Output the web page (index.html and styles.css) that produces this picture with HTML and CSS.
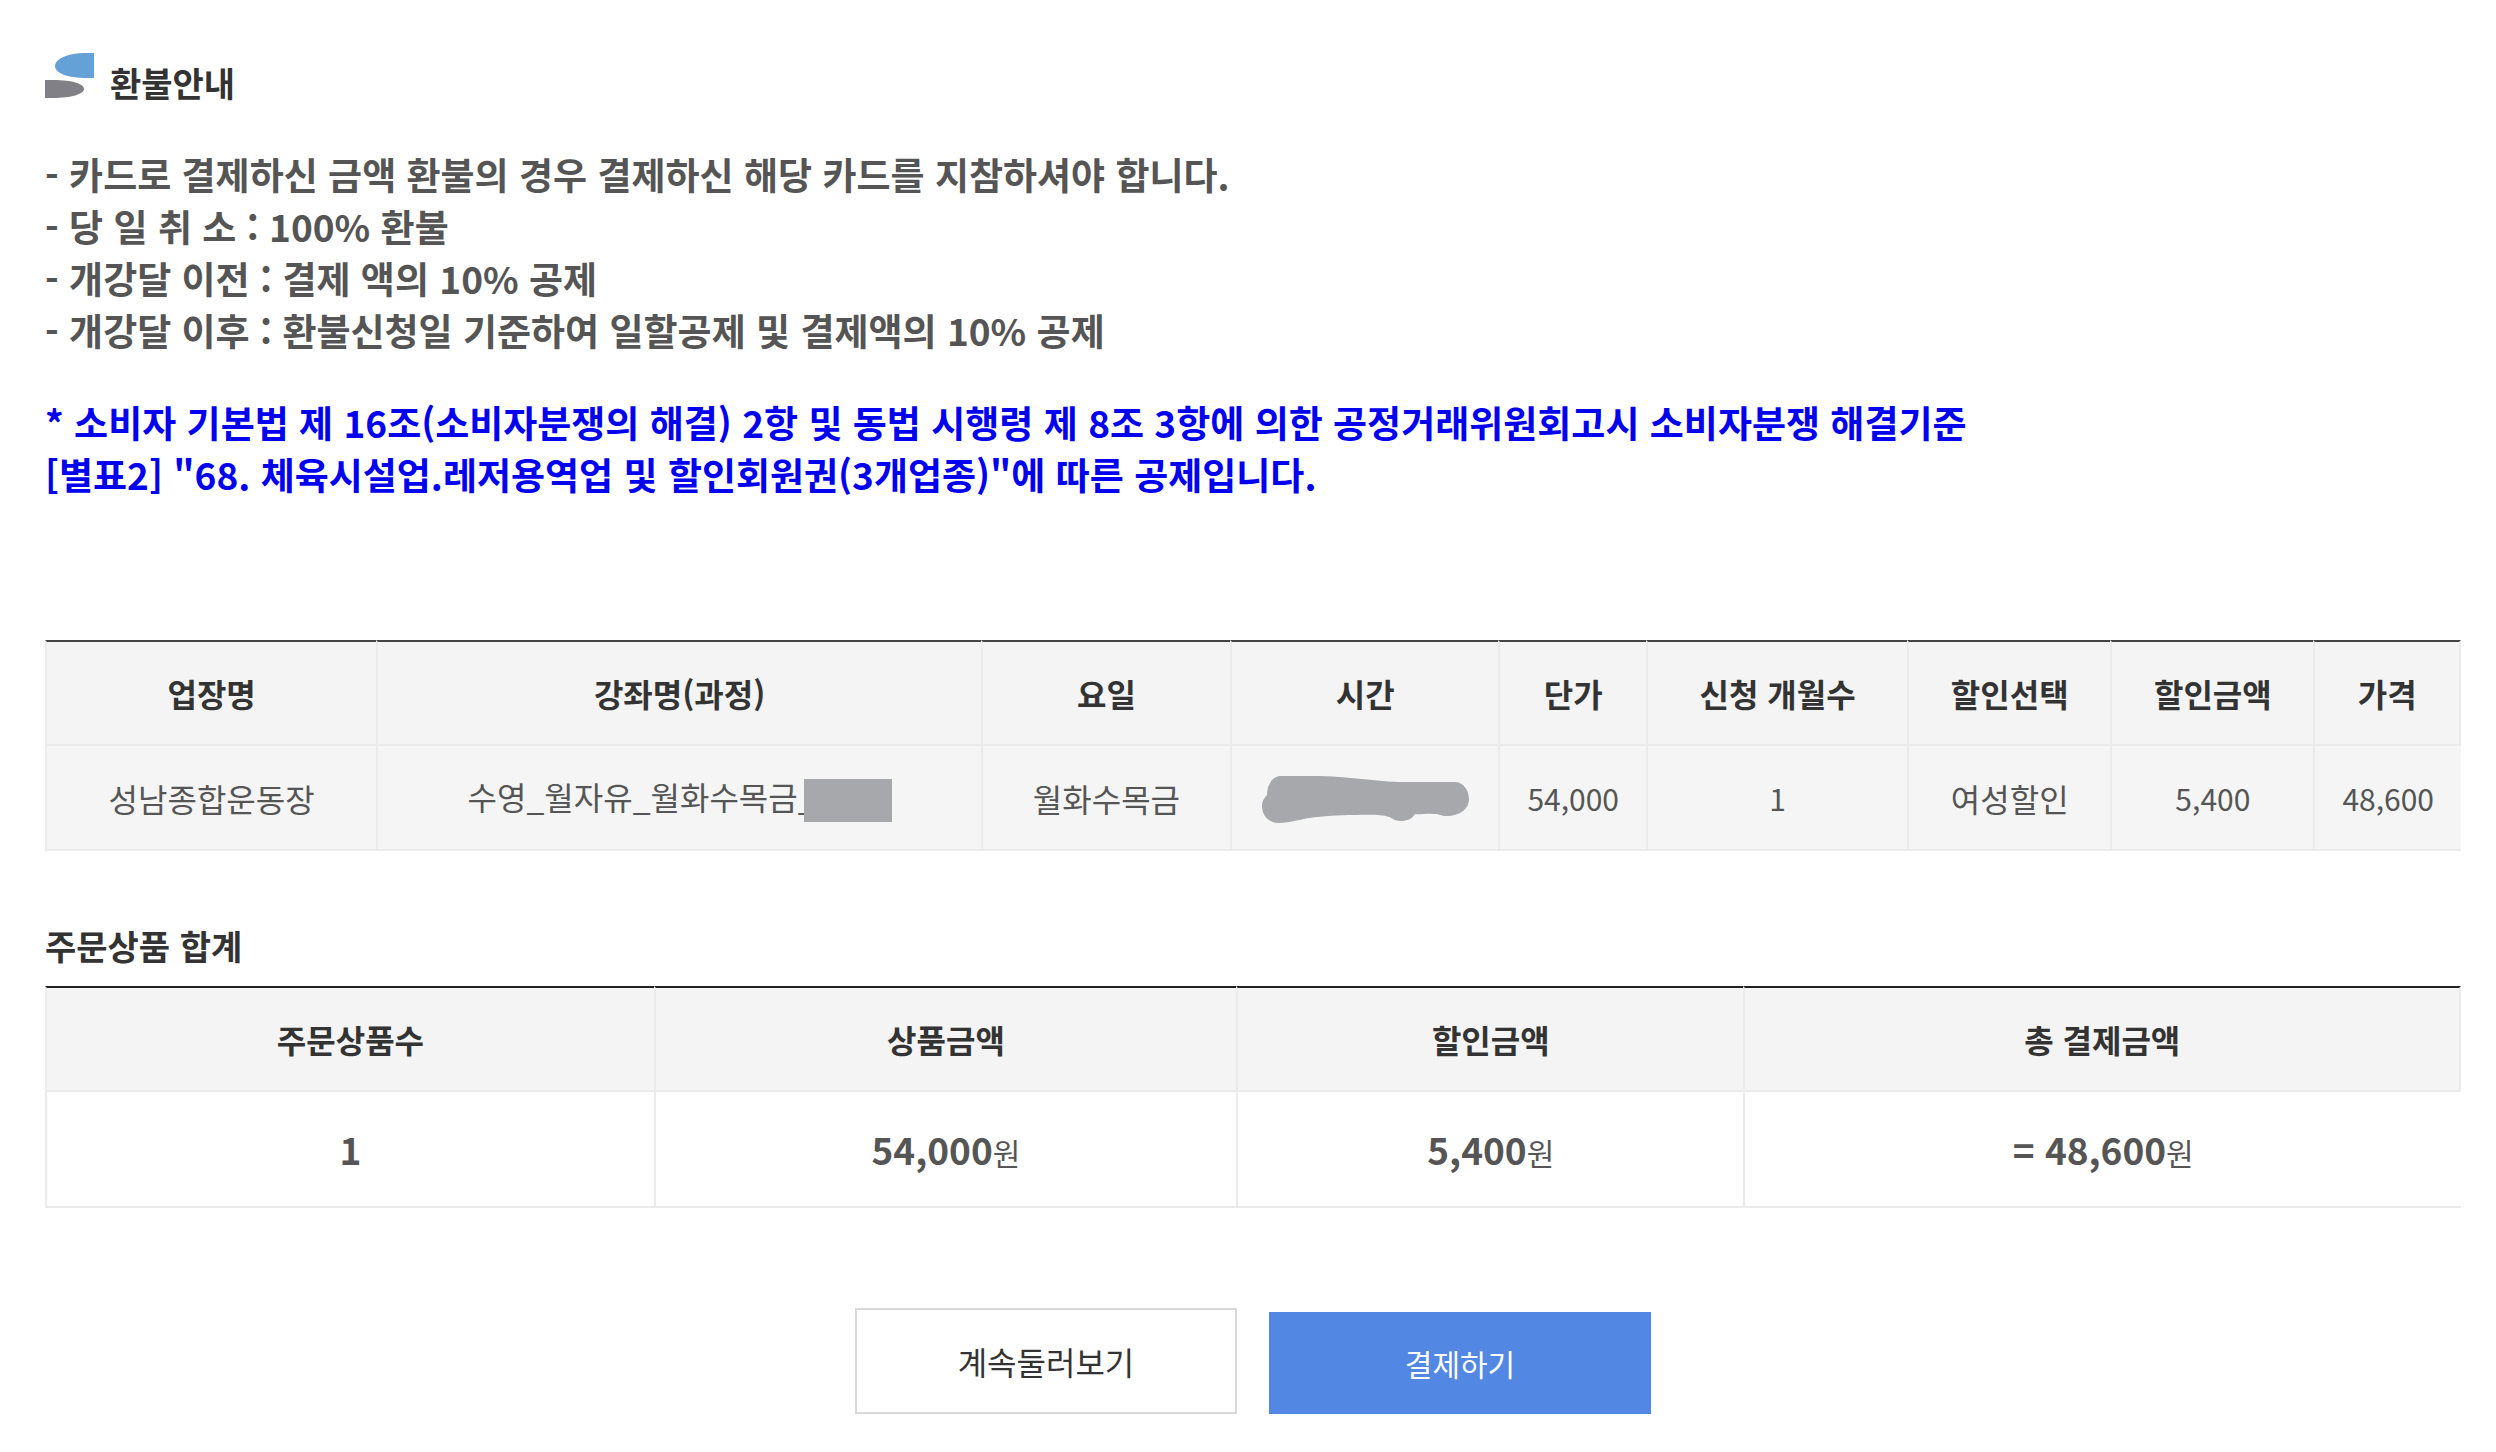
FILE: index.html
```html
<!DOCTYPE html>
<html lang="ko">
<head>
    <meta charset="UTF-8">
    <meta name="viewport" content="width=device-width, initial-scale=1.0">
    <title>수강신청 결제</title>
    <link rel="stylesheet" href="styles.css">
</head>
<body>
    <div class="container">
        <div class="refund">
            <h2 class="refund-title">
                <svg class="title-icon" viewBox="0 0 49 45" aria-hidden="true">
                    <path d="M49 0H42C22 0 10 6 10 13C10 20 22 25 42 25H49Z" fill="#64a1d6"/>
                    <path d="M0 27H8C28 27 39 31 39 36C39 41 26 45 8 45H0Z" fill="#818086"/>
                </svg>
                환불안내
            </h2>
            <p class="refund-text">
                - 카드로 결제하신 금액 환불의 경우 결제하신 해당 카드를 지참하셔야 합니다.<br>
                - 당 일 취 소 : 100% 환불<br>
                - 개강달 이전 : 결제 액의 10% 공제<br>
                - 개강달 이후 : 환불신청일 기준하여 일할공제 및 결제액의 10% 공제
            </p>
            <p class="refund-text refund-law">
                * 소비자 기본법 제 16조(소비자분쟁의 해결) 2항 및 동법 시행령 제 8조 3항에 의한 공정거래위원회고시 소비자분쟁 해결기준<br>
                [별표2] "68. 체육시설업.레저용역업 및 할인회원권(3개업종)"에 따른 공제입니다.
            </p>
        </div>

        <table class="order-table course-table">
            <colgroup>
                <col class="col-place">
                <col class="col-course">
                <col class="col-day">
                <col class="col-time">
                <col class="col-price">
                <col class="col-month">
                <col class="col-discount">
                <col class="col-discount">
                <col class="col-price">
            </colgroup>
            <thead>
                <tr>
                    <th scope="col">업장명</th>
                    <th scope="col">강좌명(과정)</th>
                    <th scope="col">요일</th>
                    <th scope="col">시간</th>
                    <th scope="col">단가</th>
                    <th scope="col">신청 개월수</th>
                    <th scope="col">할인선택</th>
                    <th scope="col">할인금액</th>
                    <th scope="col">가격</th>
                </tr>
            </thead>
            <tbody>
                <tr>
                    <td>성남종합운동장</td>
                    <td>수영_월자유_월화수목금_<span class="mask"></span></td>
                    <td>월화수목금</td>
                    <td>
                        <svg class="mask-time" viewBox="0 0 207 47" aria-hidden="true">
                            <path d="M5 19C5 8 11 0 19 0H50C90 0 112 6 142 6H193C201 6 207 14 207 23C207 33 198 40 184 40C179 40 178 38 172 38C163 37 160 39 153 38C150 43 145 45 139 45C132 45 131 42 127 41C118 38 106 39 93 39C76 39 62 40 47 42C36 44 25 47 17 47C7 47 0 40 0 30C0 25 3 21 5 19Z" fill="#a7a8ac"/>
                        </svg>
                    </td>
                    <td class="num">54,000</td>
                    <td class="num">1</td>
                    <td>여성할인</td>
                    <td class="num">5,400</td>
                    <td class="num">48,600</td>
                </tr>
            </tbody>
        </table>

        <h3 class="total-title">주문상품 합계</h3>
        <table class="order-table total-table">
            <colgroup>
                <col class="col-count">
                <col class="col-amount">
                <col class="col-minus">
                <col class="col-total">
            </colgroup>
            <thead>
                <tr>
                    <th scope="col">주문상품수</th>
                    <th scope="col">상품금액</th>
                    <th scope="col">할인금액</th>
                    <th scope="col">총 결제금액</th>
                </tr>
            </thead>
            <tbody>
                <tr>
                    <td><strong>1</strong></td>
                    <td><strong>54,000</strong>원</td>
                    <td><strong>5,400</strong>원</td>
                    <td><strong>= 48,600</strong>원</td>
                </tr>
            </tbody>
        </table>

        <div class="buttons">
            <button type="button" class="btn btn-continue">계속둘러보기</button>
            <button type="button" class="btn btn-pay">결제하기</button>
        </div>
    </div>
</body>
</html>
```
FILE: styles.css
```css
* {
    margin: 0;
    padding: 0;
    box-sizing: border-box;
}
body {
    font-family: 'Noto Sans CJK KR', sans-serif;
    background: #fff;
    color: #555;
}
.container {
    padding: 53px 35px 36px 45px;
}
.refund-title {
    display: flex;
    align-items: flex-start;
    gap: 16px;
    color: #333;
    font-size: 34px;
    line-height: 60px;
    font-weight: 700;
    margin-bottom: 35px;
}
.title-icon {
    width: 49px;
    height: 45px;
}
.refund-text {
    font-size: 37px;
    line-height: 52px;
    font-weight: 700;
    margin-bottom: 40px;
}
.refund-law {
    color: #0000f0;
    margin-bottom: 140px;
}
.order-table {
    width: 100%;
    table-layout: fixed;
    border-collapse: separate;
    border-spacing: 0;
    font-size: 32px;
    text-align: center;
}
.order-table th,
.order-table td {
    height: 105px;
    border-left: 2px solid #ebebeb;
    border-bottom: 2px solid #ebebeb;
    vertical-align: middle;
}
.order-table th {
    height: 106px;
    background: #f4f4f4;
    color: #333;
    font-weight: 700;
    border-top: 2px solid #444;
}
.order-table th:last-child {
    border-right: 2px solid #ebebeb;
}
.course-table td {
    background: #f5f5f5;
}
.course-table .num {
    font-size: 30px;
}
.col-place {
    width: 13.7%;
}
.col-course {
    width: 25%;
}
.col-day {
    width: 10.3%;
}
.col-time {
    width: 11.1%;
}
.col-price {
    width: 6.1%;
}
.col-month {
    width: 10.8%;
}
.col-discount {
    width: 8.4%;
}
/* covers the end of the course name */
.mask {
    display: inline-block;
    width: 88px;
    height: 43px;
    margin-left: -12px;
    background: #a7a8ac;
    vertical-align: middle;
}
.mask-time {
    display: inline-block;
    width: 207px;
    height: 47px;
    vertical-align: middle;
}
.total-title {
    color: #333;
    font-size: 34px;
    line-height: 60px;
    font-weight: 700;
    margin-top: 65px;
    margin-bottom: 10px;
}
.total-table th {
    border-top-color: #222;
}
.total-table td {
    height: 116px;
    font-size: 30px;
}
.total-table strong {
    font-size: 37px;
    font-weight: 700;
}
.col-count {
    width: 25.2%;
}
.col-amount {
    width: 24.1%;
}
.col-minus {
    width: 21%;
}
.col-total {
    width: 29.7%;
}
.buttons {
    display: flex;
    justify-content: center;
    align-items: flex-end;
    gap: 32px;
    margin-top: 100px;
}
.btn {
    width: 382px;
    font-family: inherit;
    font-weight: 400;
    cursor: pointer;
}
.btn-continue {
    height: 106px;
    background: #fff;
    color: #333;
    border: 2px solid #d9d9d9;
    font-size: 32px;
}
.btn-pay {
    height: 102px;
    background: #5287e3;
    color: #fff;
    border: none;
    font-size: 30px;
}
```
